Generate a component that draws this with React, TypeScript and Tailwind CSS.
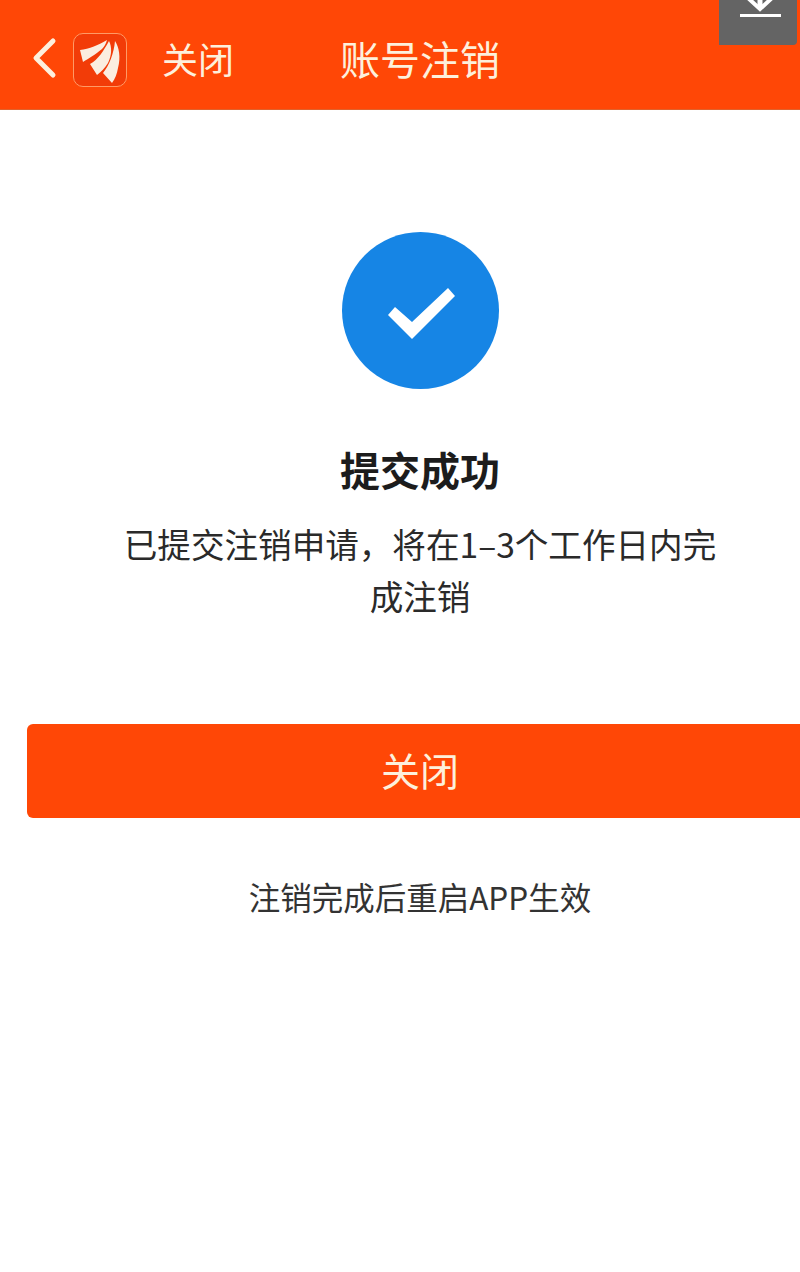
const font = "font-['Noto_Sans_CJK_SC','Noto_Sans',sans-serif]";

function Logo() {
  return (
    <div className="w-[54px] h-[54px] rounded-[10px] bg-[#f23c08] border border-[#ff9a66]">
      <svg width="52" height="52" viewBox="1 1 52 52">
        <path d="M7 17 C16 16 26 12 34 7 C33 11 31 14 29 16 C22 22 16 25 10 29 Z" fill="#fbeee0" />
        <path d="M17 31 C25 27 31 17 36 8 C39 14 39 22 35 30 C32 35 28 39 24 42 Z" fill="#fbeee0" />
        <path d="M30 40 C36 33 41 20 42 8 C46 14 48 24 45 35 C44 41 42 46 39 50 Z" fill="#fbeee0" />
      </svg>
    </div>
  );
}

export default function App() {
  return (
    <div className={`w-[800px] h-[1272px] overflow-hidden bg-white ${font}`}>
      <div className="w-[840px]">
        <header className="relative h-[110px] bg-[#ff4706] border-b border-[#e0622c] flex items-center text-[#fdf0dc]">
          <svg className="ml-[30px] mt-[6px]" width="28" height="44" viewBox="0 0 28 44" fill="none">
            <path d="M23 5 L6 22 L23 39" stroke="#fdf0dc" strokeWidth="5" strokeLinecap="round" strokeLinejoin="round" />
          </svg>
          <div className="ml-[15px] mt-[10px]"><Logo /></div>
          <span className="ml-[35px] mt-[6px] text-[36px] leading-none">关闭</span>
          <span className="ml-[106px] mt-[6px] text-[40px] leading-none">账号注销</span>
          <div className="absolute left-[719px] top-0 w-[78px] h-[45px] rounded-br-[4px] bg-[#646464]">
            <svg width="78" height="45" viewBox="0 0 78 45" fill="none">
              <path d="M29 -2 L41 9 L53 -2" stroke="white" strokeWidth="4" />
              <path d="M41 -2 V7" stroke="white" strokeWidth="5" />
              <path d="M21 15.5 H62" stroke="white" strokeWidth="3" />
            </svg>
          </div>
        </header>
        <main className="flex flex-col items-center">
          <div className="mt-[122px] w-[157px] h-[157px] rounded-full bg-[#1685e5]">
            <svg width="157" height="157" viewBox="0 0 157 157">
              <polygon points="46,83 53,75 70,90 106,56 113,64 70,107" fill="white" />
            </svg>
          </div>
          <h1 className="mt-[53px] text-[40px] leading-[54px] font-bold text-[#1c1c1c]">提交成功</h1>
          <p className="mt-[22px] w-[600px] text-center text-[33.6px] leading-[52px] text-[#2a2a2a]">
            已提交注销申请，将在1–3个工作日内完成注销
          </p>
          <button className="mt-[102px] w-[786px] h-[94px] pb-[3px] rounded-[6px] bg-[#ff4706] text-[#fdf0dc] text-[39px]">
            关闭
          </button>
          <p className="mt-[56px] text-[31.5px] leading-[44px] text-[#333333]">注销完成后重启APP生效</p>
        </main>
      </div>
    </div>
  );
}
